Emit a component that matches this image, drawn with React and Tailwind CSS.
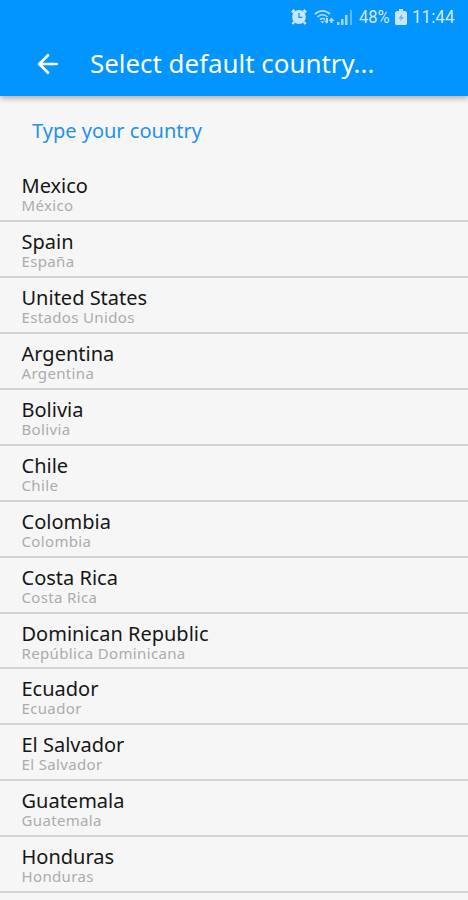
import { ArrowLeft } from 'lucide-react';

const countries = [
  { name: 'Mexico', native: 'México' },
  { name: 'Spain', native: 'España' },
  { name: 'United States', native: 'Estados Unidos' },
  { name: 'Argentina', native: 'Argentina' },
  { name: 'Bolivia', native: 'Bolivia' },
  { name: 'Chile', native: 'Chile' },
  { name: 'Colombia', native: 'Colombia' },
  { name: 'Costa Rica', native: 'Costa Rica' },
  { name: 'Dominican Republic', native: 'República Dominicana' },
  { name: 'Ecuador', native: 'Ecuador' },
  { name: 'El Salvador', native: 'El Salvador' },
  { name: 'Guatemala', native: 'Guatemala' },
  { name: 'Honduras', native: 'Honduras' },
];

function AlarmIcon() {
  return (
    <svg width="16" height="16" viewBox="0 0 16 16" fill="none">
      <path d="M1 3.5 3.5 1M15 3.5 12.5 1M3 13 1.5 15M13 13l1.5 2" stroke="#c9e6ff" strokeWidth="2.5" />
      <circle cx="8" cy="8" r="6.9" fill="#c9e6ff" />
      <path d="M8 4v4.3h3.3" stroke="#1c8fee" strokeWidth="1.2" />
    </svg>
  );
}

function WifiIcon() {
  return (
    <svg width="21" height="16" viewBox="0 0 21 16" fill="none" stroke="#b5dcff">
      <path d="M1 5.2C5.2.8 11.8.8 16 5.2M3.5 8C6.3 5 10.7 5 13.5 8M6 10.7c1.5-1.6 3.5-1.6 5 0" strokeWidth="1.7" />
      <path d="m8.500 14.500-2-2.200h4z" fill="#b5dcff" stroke="none" />
      <path d="M13 9v6l-3-3.200h3zM17.500 8.500l3 3.500h-6z" fill="#b5dcff" stroke="none" />
      <path d="M13 9v5M17.500 14v-4" strokeWidth="2" />
    </svg>
  );
}

function SignalIcon() {
  return (
    <svg width="16" height="15" viewBox="0 0 16 15">
      <path d="M0 12h2.500v3H0zM4 9h2.500v6H4zM8 5h2.500v10H8z" fill="#a5d5ff" />
      <path d="M13 0h2v15h-2z" fill="#64b7fb" />
    </svg>
  );
}

function BatteryIcon() {
  return (
    <svg width="12" height="16" viewBox="0 0 12 16">
      <path d="M4 0h4v2h2.500L12 3.500V15l-1 1H1l-1-1V3.500L1.500 2H4z" fill="#c9e6ff" />
      <path d="M7.500 4.500 3.500 9.500h2.500L5 12.500l4-4.500H6.500z" fill="#62b2f4" />
    </svg>
  );
}

function StatusBar() {
  return (
    <div className="flex h-8 items-center justify-end pt-0.5 pr-[14px] font-[Roboto,sans-serif] text-[18px] leading-none text-[#d2eaff]">
      <AlarmIcon />
      <span className="ml-[7px]"><WifiIcon /></span>
      <span className="ml-0.5"><SignalIcon /></span>
      <span className="ml-[6px] w-[31px] whitespace-nowrap">
        <span className="inline-block origin-left scale-x-[0.92]">48%</span>
      </span>
      <span className="ml-[5px]"><BatteryIcon /></span>
      <span className="ml-[5px] w-[42px] whitespace-nowrap">
        <span className="inline-block origin-left scale-x-[0.95]">11:44</span>
      </span>
    </div>
  );
}

export default function App() {
  return (
    <div className="h-[900px] w-[468px] overflow-hidden bg-[#f6f6f6] font-['Noto_Sans',sans-serif]">
      <header className="h-24 bg-[#0294ff] shadow-[0_2px_6px_rgba(60,40,30,0.4)]">
        <StatusBar />
        <div className="flex h-[63px] items-center pl-[33px] text-white">
          <ArrowLeft size={30} strokeWidth={2.1} className="mt-px" />
          <h1 className="ml-[27px] text-[25.9px] leading-none whitespace-nowrap">Select default country...</h1>
        </div>
      </header>

      <div className="flex h-[70px] items-center pl-8 text-[20px] text-[#2492ea]">
        Type your country
      </div>

      <ul>
        {countries.map((country) => (
          <li key={country.name} className="h-[55.95px] border-b-2 border-[#d3d3d3] pt-[10px] pl-[21.5px]">
            <p className="text-[20px] leading-5 text-[#161616]">{country.name}</p>
            <p className="text-[15px] leading-[19px] tracking-[0.35px] text-[#acacac]">{country.native}</p>
          </li>
        ))}
      </ul>
    </div>
  );
}
